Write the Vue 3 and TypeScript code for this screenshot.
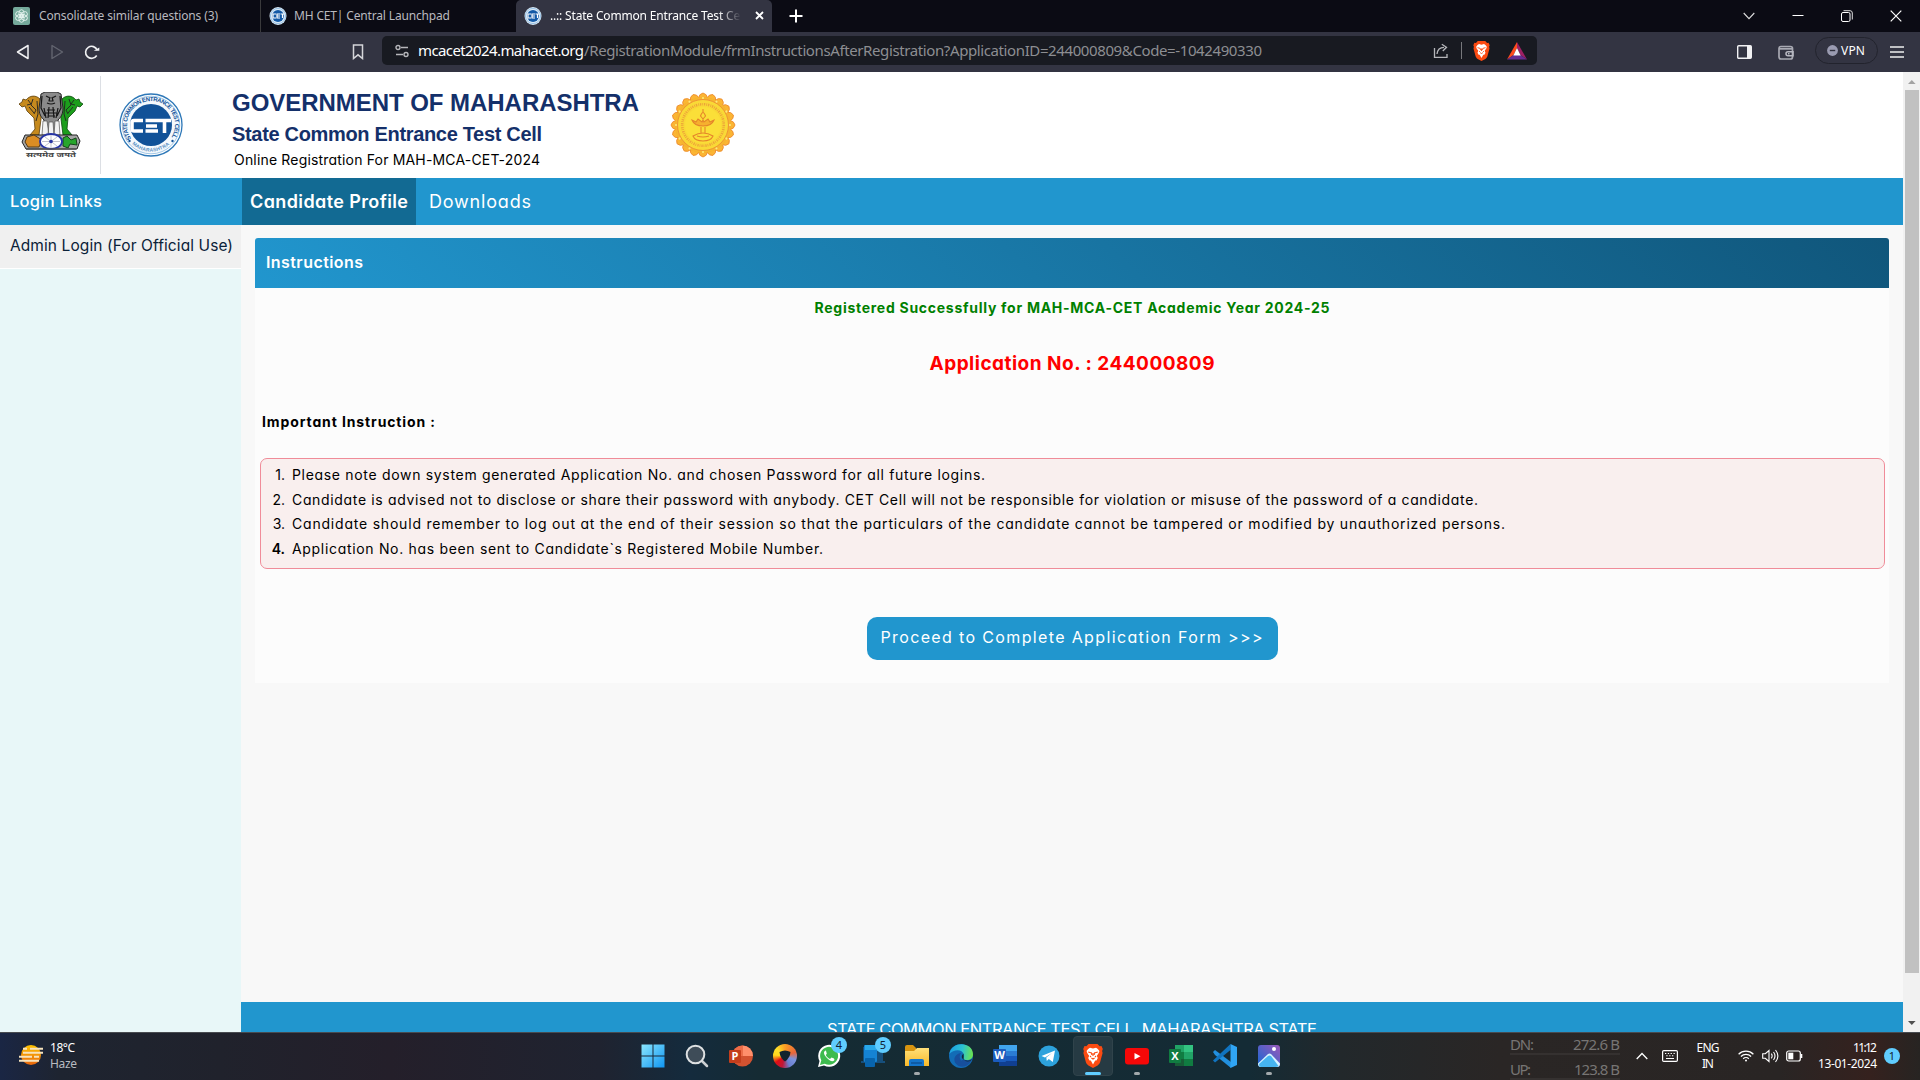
<script setup lang="ts">
import type { Directive } from 'vue'

// Spreads a label's letters so that it occupies the given width in pixels.
const vFit: Directive<HTMLElement, number> = {
  mounted(el, binding) {
    el.style.letterSpacing = '0px'
    const natural = el.getBoundingClientRect().width
    const gaps = Math.max(1, (el.textContent ?? '').trim().length - 1)
    const spacing = (binding.value - natural) / gaps
    el.style.letterSpacing = `${spacing}px`
    el.style.marginRight = `${-spacing}px`
  },
}

interface Rule { text: string; width: number }

const rules: Rule[] = [
  { text: 'Please note down system generated Application No. and chosen Password for all future logins.', width: 693 },
  { text: 'Candidate is advised not to disclose or share their password with anybody. CET Cell will not be responsible for violation or misuse of the password of a candidate.', width: 1186 },
  { text: 'Candidate should remember to log out at the end of their session so that the particulars of the candidate cannot be tampered or modified by unauthorized persons.', width: 1213 },
  { text: 'Application No. has been sent to Candidate`s Registered Mobile Number.', width: 531 },
]

const petals = Array.from({ length: 20 }, (_, i) => i * 18)
const spokes = Array.from({ length: 12 }, (_, i) => i * 30)
</script>

<template>
  <div class="screen">
    <svg class="defs" width="0" height="0">
      <defs>
        <linearGradient id="gWin" x1="0" y1="0" x2="1" y2="1"><stop offset="0" stop-color="#8be6fd" /><stop offset="1" stop-color="#0f95f2" /></linearGradient>
        <linearGradient id="gSun" x1="0" y1="0" x2="0" y2="1"><stop offset="0" stop-color="#ffc400" /><stop offset="1" stop-color="#e8650c" /></linearGradient>
        <linearGradient id="gFold" x1="0" y1="0" x2="0" y2="1"><stop offset="0" stop-color="#ffe07a" /><stop offset="1" stop-color="#f9b928" /></linearGradient>
        <linearGradient id="gEdge" x1="0" y1=".3" x2="1" y2=".4"><stop offset="0" stop-color="#1b9de2" /><stop offset=".55" stop-color="#2cc3d2" /><stop offset="1" stop-color="#6be34f" /></linearGradient>
        <linearGradient id="gPhoto" x1="0" y1="1" x2="1" y2="0"><stop offset="0" stop-color="#1668d6" /><stop offset="1" stop-color="#9a58b8" /></linearGradient>
        <symbol id="brave" viewBox="0 0 20 24">
          <path d="M5.500 0h9l2.200 2.300 1.800-.3 1.300 3-.7 2 .5 2-2.500 9.300c-.5 1.500-1.400 2.400-2.500 3.200L10 24l-4.600-2.500c-1.100-.8-2-1.700-2.500-3.200L.4 9l.5-2-.7-2L1.500 2l1.800.3z" fill="#fb4b12" />
          <path d="M10 4.400l3-.7c1 .3 2.600 2 3.400 3.300-.3 2-1.400 3.200-2.600 4.800l1 2.200-1.300 2.600-1.300-.2L10 20.500l-2.200-4.100-1.300.2-1.300-2.600 1-2.200C5 10.200 3.900 9 3.600 7 4.400 5.700 6 4 7 3.700z" fill="#fff" />
          <path d="M5.200 8l3.300.9.3 2.100M14.800 8l-3.300.9-.3 2.100M8.400 14L10 15l1.600-1M10 9v3M7 12l1 1M13 12l-1 1" fill="none" stroke="#fb4b12" stroke-width="1.100" />
        </symbol>
        <symbol id="cetMini" viewBox="0 0 18 18">
          <ellipse cx="9" cy="9" rx="8.500" ry="9" fill="#d9e9f6" /><circle cx="9" cy="9" r="7.600" fill="none" stroke="#7fb2dc" stroke-width=".7" /><circle cx="9" cy="9" r="5.900" fill="#1259a6" />
          <path d="M7 7H4v4h3M11 7H8v2h3M8 9v2h3M11.500 7h4M13.500 7v4" fill="none" stroke="#fff" stroke-width="1.200" />
        </symbol>
      </defs>
    </svg>

    <header class="tabs">
      <div class="tab first">
        <svg width="17" height="18" viewBox="0 0 17 18"><rect width="17" height="18" rx="2" fill="#75a99b" /><g fill="none" stroke="#e4f2ee" stroke-width=".9"><ellipse cx="8.500" cy="6.300" rx="2.600" ry="3.600" /><ellipse cx="8.500" cy="6.300" rx="2.600" ry="3.600" transform="rotate(60 8.500 9)" /><ellipse cx="8.500" cy="6.300" rx="2.600" ry="3.600" transform="rotate(120 8.500 9)" /><ellipse cx="8.500" cy="6.300" rx="2.600" ry="3.600" transform="rotate(180 8.500 9)" /><ellipse cx="8.500" cy="6.300" rx="2.600" ry="3.600" transform="rotate(240 8.500 9)" /><ellipse cx="8.500" cy="6.300" rx="2.600" ry="3.600" transform="rotate(300 8.500 9)" /></g></svg>
        <span v-fit="179">Consolidate similar questions (3)</span>
      </div>
      <div class="tab second">
        <svg width="18" height="18"><use href="#cetMini" /></svg>
        <span v-fit="156">MH CET| Central Launchpad</span>
      </div>
      <div class="tab active">
        <svg width="18" height="18"><use href="#cetMini" /></svg>
        <div class="clip"><span v-fit="196">..:: State Common Entrance Test Cell</span></div>
        <svg class="tabx" width="9" height="9" viewBox="0 0 9 9"><path d="M1 1l7 7M8 1L1 8" stroke="#fff" stroke-width="1.800" /></svg>
      </div>
      <svg class="plus" width="14" height="14" viewBox="0 0 14 14"><path d="M7 .5v13M.5 7h13" stroke="#fff" stroke-width="2" /></svg>
      <div class="winctl">
        <svg width="12" height="12" viewBox="0 0 12 12"><path d="M.7 3L6 8.600 11.300 3" fill="none" stroke="#ddd" stroke-width="1.100" /></svg>
        <svg width="12" height="12" viewBox="0 0 12 12"><path d="M.5 5.500h11" stroke="#fff" /></svg>
        <svg width="12" height="12" viewBox="0 0 12 12"><rect x=".5" y="2.500" width="8.500" height="9" rx="1.500" fill="none" stroke="#fff" /><path d="M2.500.7H9q2.300 0 2.300 2.300v6.500" fill="none" stroke="#ddd" /></svg>
        <svg width="12" height="12" viewBox="0 0 12 12"><path d="M.7.7l10.600 10.600M11.300.7L.7 11.300" stroke="#fff" stroke-width="1.200" /></svg>
      </div>
    </header>

    <div class="toolbar">
      <div class="navs">
        <svg width="14" height="16" viewBox="0 0 14 16"><path d="M12 1.500v13L1.500 8z" fill="none" stroke="#f1f1f3" stroke-width="1.500" stroke-linejoin="round" /></svg>
        <svg width="14" height="16" viewBox="0 0 14 16"><path d="M2 1.500v13L12.500 8z" fill="none" stroke="#62646f" stroke-width="1.400" stroke-linejoin="round" /></svg>
        <svg width="16" height="16" viewBox="0 0 16 16"><path d="M13.200 6.200A6 6 0 1 0 12.700 11.500" fill="none" stroke="#f1f1f3" stroke-width="1.600" /><path d="M9.700 6.800h5.600V3.600z" fill="#f1f1f3" /></svg>
        <svg class="mark" width="12" height="16" viewBox="0 0 12 16"><path d="M1.500 1h9v13.500L6 10.800l-4.500 3.700z" fill="none" stroke="#d5d5d9" stroke-width="1.500" /></svg>
      </div>
      <div class="urlbar">
        <svg width="14" height="14" viewBox="0 0 14 14"><g fill="none" stroke="#b6b7bb" stroke-width="1.400"><circle cx="3" cy="3.500" r="2" /><path d="M6 3.500h7M1 10.500h7" /><circle cx="11" cy="10.500" r="2" /></g></svg>
        <div class="url"><span v-fit="166" class="host">mcacet2024.mahacet.org</span><span v-fit="678" class="path">/RegistrationModule/frmInstructionsAfterRegistration?ApplicationID=244000809&amp;Code=-1042490330</span></div>
        <svg class="share" width="16" height="16" viewBox="0 0 16 16"><path d="M1.500 5v9.300h12.500V11M4 11c.5-4.500 3-6.700 7-6.700M8.800 1.300L13.500 4.300 9.800 8" fill="none" stroke="#b6b7bb" stroke-width="1.300" /></svg>
        <i class="bar" />
        <svg class="br" width="17" height="20"><use href="#brave" /></svg>
        <svg class="bat" width="20" height="18" viewBox="0 0 20 18"><path d="M10 0L0 17.500 6.500 13 10 6z" fill="#ff4a1c" /><path d="M10 0l10 17.500L13.500 13 10 6z" fill="#9e1f63" /><path d="M0 17.500h20L13.500 13h-7z" fill="#662d91" /><path d="M10 6l3.700 7.500H6.300z" fill="#fff" /></svg>
      </div>
      <div class="tools">
        <svg width="15" height="14" viewBox="0 0 15 14"><rect x=".7" y=".7" width="13.600" height="12.600" rx="1" fill="none" stroke="#f1f1f3" stroke-width="1.400" /><path d="M10 1h4v12h-4z" fill="#f1f1f3" /></svg>
        <svg class="wallet" width="16" height="15" viewBox="0 0 16 15"><rect x="1" y="1.500" width="13.500" height="12.500" rx="2" fill="none" stroke="#a8a9b2" stroke-width="1.700" /><path d="M1 3.800h13.500" stroke="#a8a9b2" stroke-width="1.800" /><path d="M15 6.800h-5a2 2 0 0 0 0 4h5zM10 8.800h1.500" fill="none" stroke="#b8b9c2" stroke-width="1.500" /></svg>
        <div class="vpn"><svg width="11" height="11" viewBox="0 0 11 11"><circle cx="5.500" cy="5.500" r="5.400" fill="#9a9bb1" /><path d="M2.800 5.500h5.400" stroke="#30313d" stroke-width="1.400" /></svg><span v-fit="24">VPN</span></div>
        <svg class="menu" width="14" height="12" viewBox="0 0 14 12"><path d="M0 1h14M0 6h14M0 11h14" stroke="#eee" stroke-width="1.400" /></svg>
      </div>
    </div>

    <div class="viewport">
      <div class="page">
        <div class="masthead">
          <div class="emblem">
            <svg width="66" height="68" viewBox="0 0 66 68">
              <g stroke-linejoin="round">
                <path d="M1 12l3-2 1-3 3 1c4-5 10-5 14-1l2 8-1 12-2 16H12l5-6-1-11-7-7-2-5-3 1z" fill="#c68a1e" stroke="#5c3f0b" stroke-width=".8" />
                <path d="M65 12l-3-2-1-3-3 1c-4-5-10-5-14-1l-2 8 1 12 2 16h9l-5-6 1-11 7-7 2-5 3 1z" fill="#1c9e1c" stroke="#0c470c" stroke-width=".8" />
                <path d="M23 2l4-2h12l4 2 2 14c0 6-2 9-5 12v15H26V28c-3-3-5-6-5-12z" fill="#8b8b8b" stroke="#262626" />
                <path d="M25 29h4l2 14h-7zM31 30h4l1 13h-6zM37 29h4l1 14h-6z" fill="#f2f2f2" stroke="#555" stroke-width=".7" />
                <path d="M28 4l3 1.500M38 4l-3 1.500M32 5l-1 4h4l-1-4M29 11q4 2 8 0M24 4l-1 12 4 8M42 4l1 12-4 8M26 16l2 10M31 15l-1 11M35 15l1 11M40 16l-2 10M29 18h8M27 21h12M30 24h7" fill="none" stroke="#161616" stroke-width="1.200" />
                <path d="M10 8l3 4-4 1M15 7l-2 6 5 5-2 4M19 9l1 13-2 7M11 15l5 6M56 8l-3 4 4 1M51 7l2 6-5 5 2 4M47 9l-1 13 2 7M55 15l-5 6" fill="none" stroke="#222" stroke-width=".9" />
                <path d="M7 43h52l3 6-3 8H8l-4-7z" fill="#a5a5a5" stroke="#222" />
                <path d="M9 45l7-2 8 5-3 7H10l-3-5z" fill="#db8d24" stroke="#543a18" /><path d="M45 46l4-2 4 4 5-2 1 7-7-1-2 4-5-2z" fill="#28a62c" stroke="#15451a" />
                <ellipse cx="33" cy="49.500" rx="11" ry="7.500" fill="#fff" stroke="#2734a4" stroke-width="1.800" />
                <path d="M24 49.500h18M33 43v13M27 45l12 9M39 45l-12 9" stroke="#99a" stroke-width=".6" /><circle cx="33" cy="49.500" r="1.800" fill="#2734a4" />
                <path d="M8 57h50" stroke="#555" stroke-width="1.500" />
              </g>
              <text x="8" y="65" textLength="50" lengthAdjust="spacingAndGlyphs" class="motto">सत्यमेव जयते</text>
            </svg>
          </div>
          <svg class="cet" width="64" height="64" viewBox="0 0 64 64">
            <circle cx="32" cy="32" r="31" fill="#fff" stroke="#2e78b8" stroke-width="1.300" /><circle cx="32" cy="32" r="28.800" fill="#f4f9fd" stroke="#8cb9de" stroke-width=".8" /><circle cx="32" cy="32" r="21" fill="#115298" />
            <path id="arcTop" d="M12.200 45.600A24 24 0 1 1 51.800 45.600" fill="none" /><path id="arcBot" d="M13 51A27.500 27.500 0 0 0 51 51" fill="none" />
            <text class="ring"><textPath href="#arcTop" textLength="102">STATE COMMON ENTRANCE TEST CELL</textPath></text>
            <text class="ring low"><textPath href="#arcBot" textLength="41">MAHARASHTRA</textPath></text>
            <circle cx="10.500" cy="48" r="1.200" fill="#115298" /><circle cx="53.500" cy="48" r="1.200" fill="#115298" />
            <path d="M24 27.500H15q-2 0-2 2V36q0 2 2 2h9M40 27.500H26.500M38 33H27M39 38H26.500M38 27.500h14M45.500 28v12" fill="none" stroke="#fff" stroke-width="3.600" />
          </svg>
          <div class="titles">
            <div class="t1"><span v-fit="407">GOVERNMENT OF MAHARASHTRA</span></div>
            <div class="t2"><span v-fit="310">State Common Entrance Test Cell</span></div>
            <div class="t3"><span v-fit="306">Online Registration For MAH-MCA-CET-2024</span></div>
          </div>
          <svg class="seal" width="66" height="66" viewBox="-33 -33 66 66">
            <g v-for="a in petals" :key="a" :transform="`rotate(${a})`"><path d="M-4.500-27Q-4-31 0-32Q4-31 4.500-27z" fill="#fbb534" stroke="#ee8f32" stroke-width=".9" /></g>
            <circle r="28" fill="#f7b52e" /><circle r="25.500" fill="#f9d936" stroke="#ee9434" stroke-width="1" /><circle r="20.800" fill="none" stroke="#eda43a" stroke-width="2.600" stroke-dasharray="1.300 1.100 .8 .9" /><circle r="18" fill="#fbdf38" />
            <g v-for="s in spokes" :key="s" :transform="`rotate(${s})`"><circle cy="-27" r="1.100" fill="#fde87a" /></g>
            <g fill="none" stroke="#e5852a" stroke-width="1.100"><path d="M-11-5C-8 3 8 3 11-5L7-3 5-6 1-3 0-5-1-3-5-6-7-3z" fill="#f6b02e" /><path d="M-2 2v6M2 2v6M-10 11q10-6 20 0-2 5-10 5t-10-5zM-6 11q6 2 12 0M-2.500-9q2.500-7 5 0l-2.500 3zM0-16v3" /></g>
          </svg>
        </div>

        <nav class="navbar">
          <div class="side"><span v-fit="92">Login Links</span></div>
          <div class="item on"><span v-fit="158">Candidate Profile</span></div>
          <div class="item"><span v-fit="102">Downloads</span></div>
        </nav>

        <div class="columns">
          <aside>
            <div class="admin"><span v-fit="223">Admin Login (For Official Use)</span></div>
          </aside>
          <main>
            <section class="card">
              <h3><span v-fit="97">Instructions</span></h3>
              <div class="body">
                <p class="ok"><span v-fit="515">Registered Successfully for MAH-MCA-CET Academic Year 2024-25</span></p>
                <p class="appno"><span v-fit="285">Application No. : 244000809</span></p>
                <p class="imp"><span v-fit="173">Important Instruction :</span></p>
                <div class="rules">
                  <div v-for="(r, i) in rules" :key="i" class="rule"><b :class="{ heavy: i === 3 }">{{ i + 1 }}.</b><span v-fit="r.width">{{ r.text }}</span></div>
                </div>
                <button type="button"><span v-fit="382">Proceed to Complete Application Form &gt;&gt;&gt;</span></button>
              </div>
            </section>
            <footer><span v-fit="490">STATE COMMON ENTRANCE TEST CELL, MAHARASHTRA STATE</span></footer>
          </main>
        </div>
      </div>
      <div class="scroll">
        <svg width="17" height="18" viewBox="0 0 17 18"><path d="M5 12l3.800-4 3.800 4z" fill="#a3a3a3" /></svg>
        <div class="thumb" />
        <svg class="down" width="17" height="17" viewBox="0 0 17 17"><path d="M5 6h7.600L8.800 10z" fill="#505050" /></svg>
      </div>
    </div>

    <div class="taskbar">
      <div class="weather">
        <svg width="26" height="22" viewBox="0 0 26 22"><circle cx="13" cy="11" r="10" fill="url(#gSun)" /><path d="M5 4.800h4M12 4.800h13M5 8.800h20M1 12.800h13M16 12.800h5M1 16.800h20" stroke="#f7e3bd" stroke-width="2" /></svg>
        <div class="two"><span v-fit="25">18°C</span><span v-fit="27" class="dim">Haze</span></div>
      </div>
      <div class="apps">
        <div class="app"><svg width="24" height="24" viewBox="0 0 24 24"><path d="M.5.500h11v11H.5zM12.500.500h11v11h-11zM.5 12.500h11v11H.5zM12.500 12.500h11v11h-11z" fill="url(#gWin)" /></svg></div>
        <div class="app"><svg width="24" height="24" viewBox="0 0 24 24"><path d="M16 16l6 6" stroke="#ccd0d3" stroke-width="2.500" stroke-linecap="round" /><circle cx="10.500" cy="10.500" r="8.800" fill="#3e4c58" stroke="#dde0e2" stroke-width="2" /></svg></div>
        <div class="app"><svg width="24" height="24" viewBox="0 0 24 24"><circle cx="13.500" cy="12" r="10.500" fill="#d35230" /><path d="M13.500 1.500A10.500 10.500 0 0 1 24 12H13.500z" fill="#ff8f6b" /><path d="M3 12a10.500 10.500 0 0 1 10.500-10.500V12z" fill="#ed6c47" /><rect y="6" width="12" height="13" rx="1" fill="#c43e1c" /><text x="6" y="16.300" text-anchor="middle" class="ms">P</text></svg></div>
        <div class="app"><i class="swirl"><svg width="12" height="12" viewBox="0 0 12 12"><path d="M.5 2q5.500-3 11 0-.5 6-5.500 9.500Q1 8 .5 2z" fill="#11242e" /></svg></i></div>
        <div class="app"><svg width="24" height="24" viewBox="0 0 24 24"><path d="M1 23l1.500-6A11 11 0 1 1 7 21.500z" fill="#fff" /><path d="M3 21l1.300-4.700a9 9 0 1 1 3.500 3.400z" fill="#3dbb4e" /><path d="M8.500 6.500c-3 1.500-1 5 1.500 7.500s5.500 4.500 7.500 2l-.5-1.500-2.500-1-1.500 1.500c-2-.8-3.500-2.300-4.200-4l1-1.300-.8-3z" fill="#fff" /></svg><em>4</em></div>
        <div class="app"><svg width="24" height="24" viewBox="0 0 24 24"><path d="M2 3h20v14H2zM0 17h24v2H0z" fill="#164f7c" /><rect x="3" y="1" width="13" height="17" rx="1" fill="#1583d4" /><path d="M4 1h11v5H4z" fill="#29a8e8" /><rect x="4" y="14" width="10" height="9" rx="1" fill="#0864ad" /></svg><em>5</em></div>
        <div class="app"><svg width="24" height="24" viewBox="0 0 24 24"><path d="M0 3q0-2 2-2h6l3 3v5H0z" fill="#d79410" /><path d="M0 7h9l3-3h12v18H0z" fill="url(#gFold)" /><path d="M4 22v-5q0-2 2-2h11q2 0 2 2v5z" fill="#1475cc" /><path d="M6 19h11" stroke="#0d539a" stroke-width="1.500" /></svg><u /></div>
        <div class="app"><svg width="24" height="24" viewBox="0 0 24 24"><circle cx="12" cy="12" r="12" fill="#126cb6" /><path d="M.3 10C2-3 24-3 24 10.500c0 5-5 6.500-9 5-2-1 .5-2 0-4.500C13 4 4 6 .3 10z" fill="url(#gEdge)" /><path d="M15 15.500c3 2 6.500 1.200 8-1-2 9-13 11-17 4-2-5 1-8.500 6-9.500-3 4-.8 10 7 11-7 2-9-4.500-4-4.500z" fill="#174f9d" /><path d="M14.500 9.500c-3.500 3-1 6.500 2 7 4 .7 7-1 7.200-3-2 6-8 4-9 2z" fill="#132b35" /></svg></div>
        <div class="app"><svg width="24" height="24" viewBox="0 0 24 24"><path d="M6 1h18v6H6z" fill="#41a5ee" /><path d="M6 7h18v5H6z" fill="#2b7cd3" /><path d="M6 12h18v5H6z" fill="#185abd" /><path d="M6 17h18v5H6z" fill="#103f91" /><rect y="5" width="13" height="13" rx="1" fill="#1b5cbe" /><text x="6.500" y="15.300" text-anchor="middle" class="ms">W</text></svg></div>
        <div class="app"><svg width="24" height="24" viewBox="0 0 24 24"><circle cx="12" cy="12" r="10.500" fill="#2da2dc" /><path d="M4.500 12L18 6.500 15.800 18l-4-3-2 2-.5-3.500L15 9l-7 4.500z" fill="#fff" /></svg></div>
        <div class="app sel"><svg width="20" height="24"><use href="#brave" /></svg><u class="wide" /></div>
        <div class="app"><svg width="24" height="24" viewBox="0 0 24 24"><rect y="4" width="24" height="16.500" rx="3" fill="#f50808" /><path d="M9.500 9l6 3.200-6 3.200z" fill="#fff" /></svg><u /></div>
        <div class="app"><svg width="24" height="24" viewBox="0 0 24 24"><path d="M6 1h9v7H6z" fill="#21a366" /><path d="M15 1h9v7h-9z" fill="#33c481" /><path d="M6 8h9v7H6z" fill="#107c41" /><path d="M15 8h9v7h-9z" fill="#21a366" /><path d="M6 15h18v7H6z" fill="#185c37" /><path d="M15 15h9v7h-9z" fill="#107c41" /><rect y="5" width="12" height="14" rx="1" fill="#107c41" /><text x="6" y="16" text-anchor="middle" class="ms">X</text></svg></div>
        <div class="app"><svg width="24" height="24" viewBox="0 0 24 24"><path d="M0 8l2-2 16 12v6L2 11z" fill="#2290df" /><path d="M0 16.500L17.500 0v6L2 18.500z" fill="#1074c0" /><path d="M17.500 0L24 3v18l-6.500 3z" fill="#30a5f4" /></svg></div>
        <div class="app"><svg width="24" height="24" viewBox="0 0 24 24"><rect x="1" y="1" width="22" height="22" rx="3" fill="url(#gPhoto)" /><path d="M1 19.500L11 10q1.500-1.200 3 0l9 9.500q0 3.500-3 3.500H4q-3 0-3-3.500z" fill="#d7f3ff" /><path d="M2 20l9-8q1.500-1 3 0l7.500 10q-1 1-3 1H4q-2 0-2-3z" fill="#46b4f0" /><circle cx="17" cy="5" r="2" fill="#fff" /></svg><u /></div>
      </div>
      <div class="net">
        <div><span v-fit="24">DN:</span><span v-fit="47">272.6 B</span></div>
        <div><span v-fit="21">UP:</span><span v-fit="46">123.8 B</span></div>
      </div>
      <div class="tray">
        <svg class="up" width="12" height="8" viewBox="0 0 12 8"><path d="M.7 7L6 1.500 11.300 7" fill="none" stroke="#fff" stroke-width="1.300" /></svg>
        <svg class="kb" width="16" height="12" viewBox="0 0 16 12"><rect x=".6" y=".6" width="14.800" height="10.800" rx="1.200" fill="none" stroke="#fff" stroke-width="1.200" /><path d="M3 3.500h1.300M5.800 3.500h1.300M8.600 3.500h1.300M11.500 3.500h1.300M4.300 5.800h1.300M7.200 5.800h1.300M10 5.800h1.300M4 8.500h8" stroke="#fff" stroke-width="1.100" /></svg>
        <div class="lang"><span v-fit="23">ENG</span><span v-fit="12">IN</span></div>
        <svg class="wifi" width="16" height="12" viewBox="0 0 16 12" fill="none" stroke="#fff" stroke-width="1.200"><path d="M.6 4.200a10.500 10.500 0 0 1 14.800 0M2.900 6.500a7.300 7.300 0 0 1 10.200 0M5.200 8.700a4 4 0 0 1 5.600 0" /><circle cx="8" cy="10.500" r="1" fill="#fff" stroke="none" /></svg>
        <svg class="vol" width="17" height="14" viewBox="0 0 17 14" fill="none" stroke="#fff" stroke-width="1.100"><path d="M.7 4.700h2.600L7 1.500v11L3.300 9.300H.7zM9.300 4.700q1.700 2.300 0 4.600M11.500 3q3 4 0 8M13.500 1q4.800 6 0 12" /></svg>
        <svg class="batt" width="17" height="12" viewBox="0 0 17 12"><rect x=".7" y="1" width="13.600" height="10" rx="2" fill="none" stroke="#fff" stroke-width="1.200" /><rect x="2.300" y="2.700" width="5" height="6.600" fill="#fff" /><path d="M15.500 4v4" stroke="#fff" stroke-width="1.600" /></svg>
        <div class="clock"><span v-fit="24">11:12</span><span v-fit="59">13-01-2024</span></div>
        <div class="note">1</div>
      </div>
    </div>
  </div>
</template>

<style>
html, body { margin: 0; overflow: hidden; background: #f8f8f8; }
</style>

<style scoped>
.screen { width: 1920px; height: 1080px; display: flex; flex-direction: column; overflow: hidden; font-family: "Inter", "Liberation Sans", sans-serif; font-feature-settings: "cv11"; box-sizing: border-box; }
.screen *, .screen *::before { box-sizing: border-box; }
span { white-space: nowrap; display: inline-block; flex: none; }
svg { display: block; flex: none; }
.defs { position: absolute; }
.tabs { height: 32px; flex: none; background: #0b0b14; display: flex; align-items: center; font: 12px "Noto Sans", sans-serif; color: #b9b9bf; }
.tab { height: 32px; display: flex; align-items: center; padding-bottom: 1px; }
.tab svg + span { margin-left: 8px; }
.first { width: 261px; padding-left: 13px; border-right: 1px solid #3a3a3c; }
.first svg + span { margin-left: 9px; }
.second { width: 255px; padding-left: 8px; }
.second svg + span { margin-left: 7px; }
.active { width: 256px; padding-left: 8px; background: #333442; color: #fff; border-radius: 5px 5px 0 0; }
.clip { width: 191px; margin-left: 8px; overflow: hidden; -webkit-mask-image: linear-gradient(90deg, #000 88%, transparent); mask-image: linear-gradient(90deg, #000 88%, transparent); }
.tabx { margin-left: 14px; }
.plus { margin-left: 17px; }
.winctl { margin-left: auto; display: flex; gap: 37px; margin-right: 18px; }
.toolbar { height: 40px; flex: none; background: #333442; display: flex; align-items: center; }
.navs { width: 382px; display: flex; align-items: center; padding-left: 16px; gap: 20px; margin-top: -1px; }
.navs .mark { margin-left: 232px; }
.urlbar { width: 1155px; height: 29px; margin-top: -3px; background: #181a21; border-radius: 5px; display: flex; align-items: center; padding-left: 13px; }
.url { width: 1015px; margin: -2px 0 0 9px; display: flex; font: 15px "Noto Sans", sans-serif; color: #8d8e92; }
.host { color: #fff; }
.bar { width: 1px; height: 17px; background: #77787c; margin-left: 12px; }
.br { margin-left: 11px; }
.bat { margin-left: 17px; }
.tools { display: flex; align-items: center; margin-left: 200px; }
.wallet { margin-left: 26px; }
.vpn { width: 63px; height: 27px; margin: -3px 0 0 21px; border: 1px solid #22232d; border-radius: 14px; display: flex; align-items: center; padding-left: 11px; font: 12px "Noto Sans", sans-serif; color: #fff; }
.vpn span { margin: -1px 0 0 3px; }
.menu { margin-left: 12px; }
.viewport { height: 960px; flex: none; display: flex; }
.page { width: 1903px; height: 960px; display: flex; flex-direction: column; overflow: hidden; background: #f8f8f8; }
.masthead { height: 106px; flex: none; background: #fff; display: flex; }
.emblem { width: 101px; height: 98px; margin-top: 4px; border-right: 1px solid #dcdfe4; padding: 16px 0 0 18px; }
.motto { font: bold 7px "Noto Sans Devanagari", "Noto Sans", sans-serif; fill: #444; }
.cet { margin: 21px 0 0 18px; }
.ring { font: bold 6px "Liberation Sans", sans-serif; fill: #115298; }
.ring.low { font-size: 5px; fill: #5e93c4; }
.titles { width: 438px; margin-left: 49px; color: #14306a; }
.t1 { height: 24px; margin-top: 19px; font: bold 24px/24px "Liberation Sans", sans-serif; }
.t2 { height: 24px; margin-top: 7px; font: bold 20px/24px "Liberation Sans", sans-serif; }
.t3 { height: 20px; margin: 4px 0 0 2px; font-size: 14px; line-height: 20px; color: #000; }
.seal { margin-top: 20px; }
.navbar { height: 47px; flex: none; background: #2196ce; color: #fff; display: flex; font-size: 18px; line-height: 47px; }
.side { width: 242px; padding-left: 10px; font-size: 16.5px; font-weight: 500; line-height: 46px; }
.item { padding-left: 13px; }
.on { width: 174px; padding-left: 8px; background: #126a93; font-weight: 600; }
.columns { flex: 1; display: flex; min-height: 0; }
aside { width: 241px; background: #e8f7f8; }
.admin { height: 44px; background: #f0f0f0; border-bottom: 1px solid #fff; padding-left: 10px; font-size: 15.5px; line-height: 42px; color: #0b2239; }
main { width: 1662px; display: flex; flex-direction: column; justify-content: space-between; }
.card { margin: 13px 14px 0; height: 445px; background: #fcfcfc; border-radius: 3px 3px 0 0; overflow: hidden; }
h3 { margin: 0; height: 50px; padding-left: 11px; background: linear-gradient(45deg, #2196ce, #10567b); color: #fff; font-size: 16px; line-height: 49px; font-weight: 600; }
.body { display: flex; flex-direction: column; align-items: center; padding: 10px 4px 0 5px; }
p { margin: 0; line-height: 20px; font-weight: 700; }
.ok { color: #008000; font-size: 14px; margin-right: 1px; }
.appno { color: #f00; font-size: 19px; margin-top: 36px; margin-right: 1px; }
.imp { align-self: flex-start; margin: 38px 0 0 2px; font-size: 14px; }
.rules { align-self: stretch; height: 111px; margin-top: 26px; padding-top: 4px; border: 1px solid #f08c99; border-radius: 7px; background: #f9efee; font-size: 14px; color: #000; }
.rule { height: 24.6px; line-height: 24.6px; display: flex; }
.rule b { width: 24px; margin-right: 7px; font-weight: 400; text-align: right; }
.rule b.heavy { font-weight: 600; }
button { width: 411px; height: 43px; margin-top: 48px; padding: 0 2px 3px 0; border: 0; border-radius: 10px; background: #2196ce; color: #fff; font: 16px "Inter", sans-serif; font-feature-settings: "cv11"; }
footer { height: 30px; background: #2196ce; color: #fff; text-align: center; font-size: 16.5px; line-height: 54px; overflow: hidden; }
.scroll { width: 17px; background: #f1f1f1; display: flex; flex-direction: column; }
.thumb { width: 14px; height: 883px; margin-left: 2px; background: #c1c1c1; }
.down { margin-top: auto; }
.taskbar { height: 48px; flex: none; border-top: 1px solid #484b50; display: flex; font: 12px/16px "Noto Sans", sans-serif; color: #fff; background: linear-gradient(90deg, #1a2644 0, #1e2430 60px, #20222c 220px, #241f2a 390px, #1f2330 600px, #142b3d 690px, #152b33 760px, #142b35 1250px, #22282b 1340px, #2a2625 1500px, #292524 1780px, #35211e 1870px, #272422 1920px); }
.weather { width: 632px; display: flex; padding: 11px 0 0 18px; }
.two { display: flex; flex-direction: column; align-items: flex-start; margin: -4px 0 0 6px; }
.dim { color: #b8bbc0; }
.apps { display: flex; width: 678px; margin-left: -2px; }
.app { position: relative; width: 40px; height: 40px; margin: 3px 4px 0 0; border-radius: 4px; display: flex; align-items: center; justify-content: center; flex: none; border: 1px solid transparent; }
.app:first-child { margin-left: 3px; }
.swirl { width: 24px; height: 24px; border-radius: 50%; display: flex; align-items: center; justify-content: center; background: conic-gradient(#fb9e24, #e8663a 70deg, #7b93dd 110deg, #6a7fd0 155deg, #c01838 195deg, #df0d14 235deg, #ffd91c 275deg, #fde02a 310deg, #fb9e24); }
.sel { background: #263a43; border-color: #30434b; }
.app em { position: absolute; left: 21px; top: 0; width: 16px; height: 16px; border-radius: 50%; background: #60cdff; color: #123; font-style: normal; font-size: 11px; line-height: 16px; text-align: center; }
.app u { position: absolute; left: 16px; bottom: 0; width: 6px; height: 3px; border-radius: 2px; background: #a3a9ac; }
.app u.wide { left: 11px; width: 16px; background: #60cdff; }
.ms { font: bold 11px "Open Sans", sans-serif; fill: #fff; }
.net { width: 110px; margin-left: 202px; font-size: 15px; color: #777574; }
.net div { height: 22px; display: flex; justify-content: space-between; line-height: 22px; border-bottom: 2px solid #353130; }
.net div + div { margin-top: 3px; }
.tray { display: flex; align-items: flex-start; margin-left: 16px; }
.up { margin-top: 19px; }
.kb { margin: 17px 0 0 14px; }
.lang { width: 24px; margin: 7px 0 0 18px; display: flex; flex-direction: column; align-items: center; }
.wifi { margin: 17px 0 0 18px; }
.vol { margin: 16px 0 0 8px; }
.batt { margin: 17px 0 0 7px; }
.clock { width: 60px; margin: 7px 0 0 14px; display: flex; flex-direction: column; align-items: flex-end; }
.note { width: 16px; height: 16px; margin: 15px 0 0 7px; border-radius: 50%; background: #60cdff; color: #123; font-size: 11px; line-height: 16px; text-align: center; }
</style>
